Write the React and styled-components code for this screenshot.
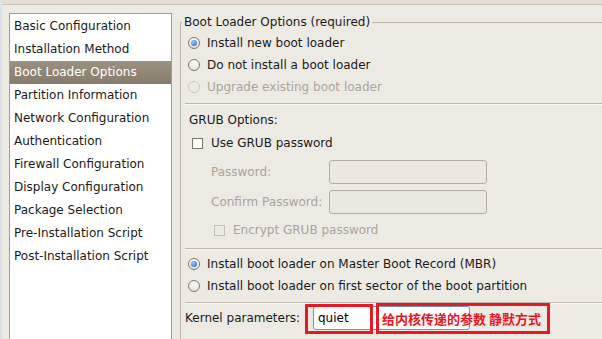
import React from 'react';
import styled, { createGlobalStyle, css } from 'styled-components';

const Global = createGlobalStyle`
  html, body { margin: 0; padding: 0; background: #edeae4; }
  body {
    font-family: "DejaVu Sans", "Noto Sans CJK SC", sans-serif;
    font-size: 12px;
    color: #1a1a1a;
  }
  * { box-sizing: border-box; }
`;

const Window = styled.div`
  width: 602px;
  height: 339px;
  overflow: hidden;
  display: flex;
  flex-direction: column;
  border-left: 2px solid #dbe2ea;
  background: #edeae4;
`;

const TopStrip = styled.div`
  flex: none;
  height: 5px;
  background: #e3ddd4;
  border-bottom: 1px solid #c9c1b5;
`;

const Body = styled.div`
  flex: 1;
  display: flex;
  padding-left: 7px;
  min-height: 0;
`;

const SectionList = styled.ul`
  flex: none;
  list-style: none;
  margin: 8px 0 0;
  padding: 1px 0 0;
  width: 163px;
  height: 400px;
  background: #fff;
  border: 1px solid #a29c92;
`;

const SectionItem = styled.li`
  height: 23px;
  line-height: 23px;
  padding-left: 4px;
  white-space: nowrap;
  ${p => p.$selected && css`
    background: linear-gradient(#9b9181, #877c6c);
    color: #fff;
  `}
`;

const RightPane = styled.div`
  flex: 1;
  min-width: 0;
  margin-left: 8px;
  overflow: hidden;
`;

const Frame = styled.fieldset`
  margin: 10px -30px 0 0;
  padding: 0 0 0 1px;
  height: 420px;
  min-width: 0;
  border: 1px solid #bdb6ab;
`;

const FrameTitle = styled.legend`
  padding: 0 2px;
  margin-left: 0;
  line-height: 15px;
  font-size: 12px;
`;

const Content = styled.div`
  padding-top: 2px;
  display: flex;
  flex-direction: column;
`;

const OptionRow = styled.label`
  display: flex;
  align-items: center;
  height: ${p => p.$h || 22}px;
  margin-top: ${p => p.$mt || 0}px;
  padding-left: ${p => p.$indent || 0}px;
  gap: ${p => p.$gap || 7}px;
  white-space: nowrap;
  color: ${p => (p.$disabled ? '#aaa49a' : 'inherit')};
`;

const RadioCircle = styled.span`
  flex: none;
  width: 12px;
  height: 12px;
  border-radius: 50%;
  border: 1px solid ${p => (p.$disabled ? '#cdc7bd' : '#7c7569')};
  background: ${p => (p.$disabled ? '#edeae4' : 'linear-gradient(#ffffff, #e4e0da)')};
  display: flex;
  align-items: center;
  justify-content: center;
  &::after {
    content: '';
    display: ${p => (p.$checked ? 'block' : 'none')};
    width: 6px;
    height: 6px;
    border-radius: 50%;
    background: radial-gradient(circle at 40% 35%, #9fcaf4, #3b7fcf 70%);
  }
`;

const CheckBox = styled.span`
  flex: none;
  width: 11px;
  height: 11px;
  border: 1px solid ${p => (p.$disabled ? '#c6c0b6' : '#7c7569')};
  background: ${p => (p.$disabled ? '#edeae4' : '#fff')};
`;

const Separator = styled.div`
  margin: ${p => p.$mt || 0}px 0 0 3px;
  height: 2px;
  border-top: 1px solid #bfb8ad;
  border-bottom: 1px solid #f9f8f5;
`;

const FieldLabel = styled.span`
  width: ${p => p.$w}px;
  flex: none;
`;

const TextField = styled.input`
  width: ${p => p.$w}px;
  height: 24px;
  margin: 0;
  border-radius: 3px;
  padding: 0 4px;
  font: inherit;
  font-size: 12px;
  color: #000;
  outline: none;
  border: 1px solid ${p => (p.$focused ? '#6f93c4' : '#b5ada1')};
  background: ${p => (p.$disabled ? '#ebe8e2' : '#fff')};
`;

const FieldRow = styled.div`
  display: flex;
  align-items: center;
  height: 24px;
  margin-top: ${p => p.$mt || 0}px;
  padding-left: ${p => p.$indent || 0}px;
  white-space: nowrap;
  color: ${p => (p.$disabled ? '#aaa49a' : 'inherit')};
`;

const Annotated = styled.div`
  position: relative;
  flex: none;
`;

const RedBox = styled.div`
  position: absolute;
  left: ${p => p.$l}px;
  top: ${p => p.$t}px;
  width: ${p => p.$w}px;
  height: ${p => p.$h}px;
  border: 3px solid #e61a22;
  display: flex;
  align-items: center;
  padding-left: 3px;
  pointer-events: none;
`;

const NoteText = styled.span`
  font-family: "Noto Sans CJK SC", sans-serif;
  font-weight: 700;
  font-size: 13px;
  color: #e8161e;
  white-space: nowrap;
`;

const Plain = styled.div`
  display: flex;
  align-items: center;
  height: 22px;
  margin-top: ${p => p.$mt || 0}px;
  padding-left: ${p => p.$indent || 0}px;
`;

const sections = [
  'Basic Configuration',
  'Installation Method',
  'Boot Loader Options',
  'Partition Information',
  'Network Configuration',
  'Authentication',
  'Firewall Configuration',
  'Display Configuration',
  'Package Selection',
  'Pre-Installation Script',
  'Post-Installation Script',
];

const Radio = ({ label, checked, disabled, mt }) => (
  <OptionRow $indent={6} $mt={mt} $disabled={disabled}>
    <RadioCircle $checked={checked} $disabled={disabled} />
    {label}
  </OptionRow>
);

export default function App() {
  return (
    <>
      <Global />
      <Window>
        <TopStrip />
        <Body>
          <SectionList>
            {sections.map(s => (
              <SectionItem key={s} $selected={s === 'Boot Loader Options'}>
                {s}
              </SectionItem>
            ))}
          </SectionList>
          <RightPane>
            <Frame>
              <FrameTitle>Boot Loader Options (required)</FrameTitle>
              <Content>
                <Radio label="Install new boot loader" checked />
                <Radio label="Do not install a boot loader" />
                <Radio label="Upgrade existing boot loader" disabled />
                <Separator $mt={5} />
                <Plain $mt={4} $indent={7}>GRUB Options:</Plain>
                <OptionRow $indent={10} $mt={1} $gap={8}>
                  <CheckBox />
                  Use GRUB password
                </OptionRow>
                <FieldRow $mt={6} $indent={29} $disabled>
                  <FieldLabel $w={118}>Password:</FieldLabel>
                  <TextField $w={158} $disabled disabled />
                </FieldRow>
                <FieldRow $mt={6} $indent={29} $disabled>
                  <FieldLabel $w={118}>Confirm Password:</FieldLabel>
                  <TextField $w={158} $disabled disabled />
                </FieldRow>
                <OptionRow $indent={32} $mt={5} $gap={8} $disabled>
                  <CheckBox $disabled />
                  Encrypt GRUB password
                </OptionRow>
                <Separator $mt={7} />
                <Radio label="Install boot loader on Master Boot Record (MBR)" checked mt={3} />
                <Radio label="Install boot loader on first sector of the boot partition" />
                <Separator $mt={5} />
                <FieldRow $mt={2} $indent={3}>
                  <FieldLabel $w={128}>Kernel parameters:</FieldLabel>
                  <Annotated>
                    <TextField $w={157} $focused defaultValue="quiet" />
                    <RedBox $l={-8} $t={-2} $w={68} $h={30} />
                    <RedBox $l={63} $t={-3} $w={174} $h={31}>
                      <NoteText>给内核传递的参数 静默方式</NoteText>
                    </RedBox>
                  </Annotated>
                </FieldRow>
              </Content>
            </Frame>
          </RightPane>
        </Body>
      </Window>
    </>
  );
}
